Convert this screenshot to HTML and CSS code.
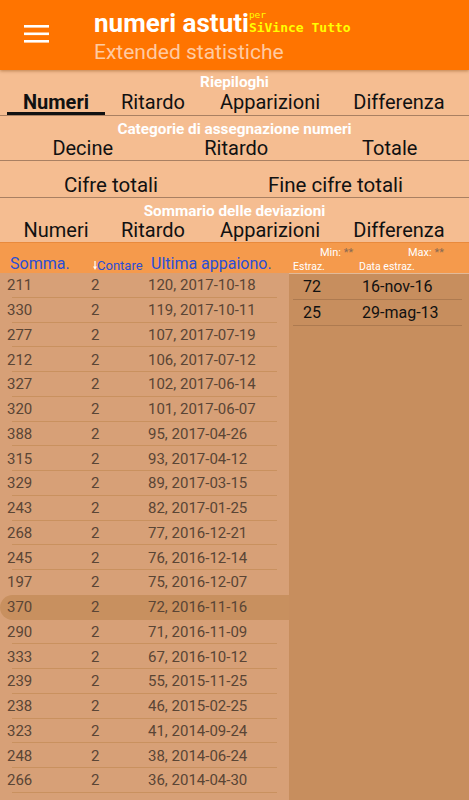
FILE: index.html
```html
<!DOCTYPE html>
<html lang="it">
<head>
<meta charset="utf-8">
<title>numeri astuti</title>
<link rel="stylesheet" href="styles.css">
</head>
<body>
<div class="app">
  <header class="topbar">
    <div class="menu-btn">
      <svg width="26" height="20" viewBox="0 0 26 20"><rect x="0" y="1" width="25" height="2.6" fill="#fff"/><rect x="0" y="8.5" width="25" height="2.6" fill="#fff"/><rect x="0" y="16" width="25" height="2.6" fill="#fff"/></svg>
    </div>
    <div class="titles">
      <div class="title">numeri astuti<span class="brand"><span class="per">per</span><span class="sivince">SiVince Tutto</span></span></div>
      <div class="subtitle">Extended statistiche</div>
    </div>
  </header>

  <section class="summary">
    <div class="sec-label">Riepiloghi</div>
    <div class="tabs tabs-main">
      <div class="tab active">Numeri</div>
      <div class="tab">Ritardo</div>
      <div class="tab">Apparizioni</div>
      <div class="tab">Differenza</div>
    </div>
    <div class="sec-label">Categorie di assegnazione numeri</div>
    <div class="row3">
      <div>Decine</div>
      <div>Ritardo</div>
      <div>Totale</div>
    </div>
    <div class="row2">
      <div>Cifre totali</div>
      <div>Fine cifre totali</div>
    </div>
    <div class="sec-label">Sommario delle deviazioni</div>
    <div class="tabs tabs-dev">
      <div class="tab">Numeri</div>
      <div class="tab">Ritardo</div>
      <div class="tab">Apparizioni</div>
      <div class="tab">Differenza</div>
    </div>
  </section>

  <section class="table-head">
    <div class="head-left">
      <div class="hc hc1">Somma.</div>
      <div class="hc hc2"><svg class="arrow" width="4" height="9" viewBox="0 0 4 9"><rect x="1.4" y="0" width="1.2" height="6" fill="#fff"/><path d="M0 5.5 L4 5.5 L2 9 Z" fill="#fff"/></svg>Contare</div>
      <div class="hc hc3">Ultima appaiono.</div>
    </div>
    <div class="head-right">
      <div class="minmax">
        <span class="mm mm-min">Min: <em>**</em></span>
        <span class="mm mm-max">Max: <em>**</em></span>
      </div>
      <div class="subhead">
        <span class="sh1">Estraz.</span>
        <span class="sh2">Data estraz.</span>
      </div>
    </div>
  </section>

  <section class="table-body">
    <div class="list">
      <div class="lrow"><span class="c1">211</span><span class="c2">2</span><span class="c3">120, 2017-10-18</span></div>
      <div class="lrow"><span class="c1">330</span><span class="c2">2</span><span class="c3">119, 2017-10-11</span></div>
      <div class="lrow"><span class="c1">277</span><span class="c2">2</span><span class="c3">107, 2017-07-19</span></div>
      <div class="lrow"><span class="c1">212</span><span class="c2">2</span><span class="c3">106, 2017-07-12</span></div>
      <div class="lrow"><span class="c1">327</span><span class="c2">2</span><span class="c3">102, 2017-06-14</span></div>
      <div class="lrow"><span class="c1">320</span><span class="c2">2</span><span class="c3">101, 2017-06-07</span></div>
      <div class="lrow"><span class="c1">388</span><span class="c2">2</span><span class="c3">95, 2017-04-26</span></div>
      <div class="lrow"><span class="c1">315</span><span class="c2">2</span><span class="c3">93, 2017-04-12</span></div>
      <div class="lrow"><span class="c1">329</span><span class="c2">2</span><span class="c3">89, 2017-03-15</span></div>
      <div class="lrow"><span class="c1">243</span><span class="c2">2</span><span class="c3">82, 2017-01-25</span></div>
      <div class="lrow"><span class="c1">268</span><span class="c2">2</span><span class="c3">77, 2016-12-21</span></div>
      <div class="lrow"><span class="c1">245</span><span class="c2">2</span><span class="c3">76, 2016-12-14</span></div>
      <div class="lrow pre-sel"><span class="c1">197</span><span class="c2">2</span><span class="c3">75, 2016-12-07</span></div>
      <div class="lrow selected"><span class="c1">370</span><span class="c2">2</span><span class="c3">72, 2016-11-16</span></div>
      <div class="lrow"><span class="c1">290</span><span class="c2">2</span><span class="c3">71, 2016-11-09</span></div>
      <div class="lrow"><span class="c1">333</span><span class="c2">2</span><span class="c3">67, 2016-10-12</span></div>
      <div class="lrow"><span class="c1">239</span><span class="c2">2</span><span class="c3">55, 2015-11-25</span></div>
      <div class="lrow"><span class="c1">238</span><span class="c2">2</span><span class="c3">46, 2015-02-25</span></div>
      <div class="lrow"><span class="c1">323</span><span class="c2">2</span><span class="c3">41, 2014-09-24</span></div>
      <div class="lrow"><span class="c1">248</span><span class="c2">2</span><span class="c3">38, 2014-06-24</span></div>
      <div class="lrow"><span class="c1">266</span><span class="c2">2</span><span class="c3">36, 2014-04-30</span></div>
    </div>
    <div class="side">
      <div class="srow"><span class="s1">72</span><span class="s2">16-nov-16</span></div>
      <div class="srow"><span class="s1">25</span><span class="s2">29-mag-13</span></div>
    </div>
  </section>
</div>
</body>
</html>
```

FILE: styles.css
```css
* { box-sizing: border-box; }
html, body { margin: 0; padding: 0; }
body {
  width: 469px;
  height: 800px;
  overflow: hidden;
  font-family: Roboto, "Noto Sans", "Liberation Sans", sans-serif;
  background: #f5bd91;
}
.app { display: flex; flex-direction: column; height: 800px; }

/* top bar */
.topbar {
  height: 70px;
  background: #ff7400;
  display: flex;
  box-shadow: 0 1px 3px rgba(120, 60, 0, 0.45);
  position: relative;
  z-index: 2;
  flex: none;
}
.menu-btn { width: 94px; padding: 24px 0 0 24px; }
.menu-btn svg { display: block; }
.titles { display: flex; flex-direction: column; padding-top: 8px; }
.title {
  color: #fff;
  font-weight: 700;
  font-size: 26px;
  line-height: 30px;
  white-space: nowrap;
}
.brand {
  display: inline-block;
  vertical-align: baseline;
  font-family: "DejaVu Sans Mono", "Liberation Mono", monospace;
  color: #ffff00;
  margin-left: 0;
}
.per { display: block; font-size: 9.5px; line-height: 11px; font-weight: 400; }
.sivince { display: block; font-size: 13px; line-height: 15px; font-weight: 700; }
.subtitle {
  margin-top: 2px;
  color: #ffcaa2;
  font-size: 21px;
  line-height: 24px;
}

/* summary */
.summary { flex: none; padding-top: 4px; }
.sec-label {
  color: #fff;
  font-weight: 700;
  font-size: 15.3px;
  line-height: 16px;
  text-align: center;
}
.tabs {
  display: grid;
  grid-template-columns: 98px 96px 138px 120px;
  padding-left: 7px;
  font-size: 20px;
  color: #111;
}
.tab { text-align: center; line-height: 25px; height: 25px; }
.tabs-main { border-bottom: 1px solid #a98062; }
.tab.active { font-weight: 700; box-shadow: inset 0 -3px 0 #111; }
.row3 {
  display: grid;
  grid-template-columns: repeat(3, 153.5px);
  padding-left: 6px;
  font-size: 20px;
  line-height: 23px;
  color: #111;
  text-align: center;
  border-bottom: 1px solid #a98062;
}
.row2 {
  display: grid;
  grid-template-columns: 222px 227px;
  font-size: 20.5px;
  line-height: 24px;
  padding-top: 12px;
  color: #111;
  text-align: center;
  border-bottom: 1px solid #a98062;
}
.tabs-main + .sec-label, .row2 + .sec-label { line-height: 21px; height: 21px; padding-top: 3px; }
.tabs-dev { border-bottom: 1px solid #e98a3c; }
.tabs-dev .tab { line-height: 23px; height: 23px; }

/* table header */
.table-head {
  flex: none;
  height: 30px;
  background: #f59a4c;
  display: flex;
}
.head-left { width: 289px; display: flex; align-items: flex-end; padding-bottom: 0; }
.hc { color: #2a4ed6; white-space: nowrap; }
.hc1 { width: 93px; padding-left: 10px; font-size: 16px; line-height: 18px; }
.hc2 { width: 58px; font-size: 13px; line-height: 15px; display: flex; align-items: center; }
.hc3 { font-size: 16px; line-height: 18px; }
.arrow { display: block; flex: none; }
.head-right { width: 180px; display: flex; flex-direction: column; }
.minmax { height: 17px; display: flex; padding-left: 31px; padding-top: 2px; font-size: 11px; line-height: 15px; color: #fff; }
.mm em { font-style: normal; color: #8a6a52; }
.mm-min { width: 88px; }
.subhead { display: flex; font-size: 10.5px; line-height: 14px; color: #fff; padding-left: 4px; }
.sh1 { width: 66px; }

/* table body */
.table-body { flex: 1; display: flex; min-height: 0; }
.list { width: 289px; background: #d7a077; }
.lrow {
  height: 24.75px;
  display: flex;
  align-items: center;
  font-size: 15px;
  color: #5a4535;
  position: relative;
}
.lrow::after {
  content: "";
  position: absolute;
  left: 12px;
  right: 12px;
  bottom: 0;
  height: 1px;
  background: #c9915f;
}
.lrow.selected {
  background: #c8905f;
  border-radius: 13px 0 0 13px;
}
.lrow.selected::after, .lrow.pre-sel::after { display: none; }
.c1 { width: 91px; padding-left: 7px; }
.c2 { width: 57px; }
.side {
  flex: 1;
  background: #c78e5e;
  border-top: 1px solid rgba(255, 230, 210, 0.5);
  padding: 0 7px 0 4px;
}
.srow {
  height: 26px;
  display: flex;
  align-items: center;
  font-size: 16px;
  color: #111;
  border-bottom: 1px solid #ad7a50;
}
.s1 { width: 69px; padding-left: 10px; }
```
